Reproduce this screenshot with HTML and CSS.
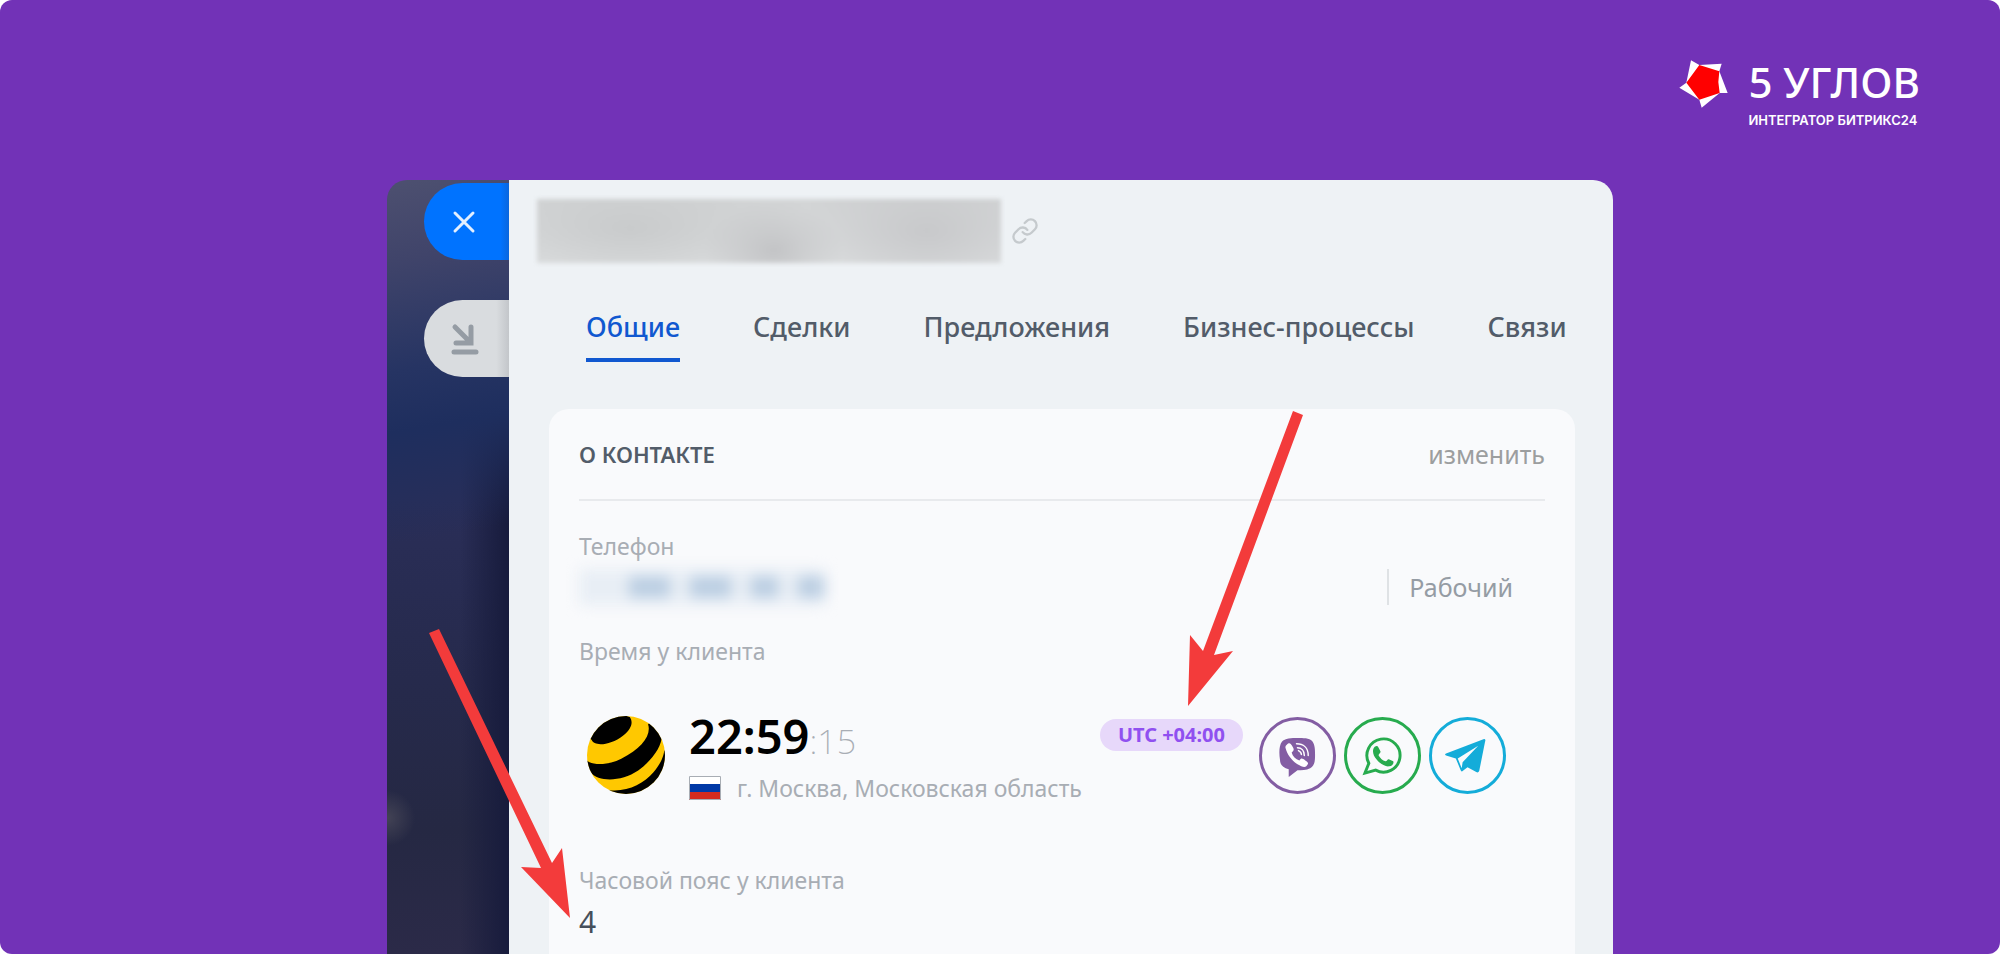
FILE: index.html
```
<!DOCTYPE html>
<html lang="ru">
<head>
    <meta charset="UTF-8">
    <meta name="viewport" content="width=device-width, initial-scale=1.0">
    <title>5 углов</title>
    <link rel="stylesheet" href="styles.css">
</head>
<body>
    <div class="page">
        <header class="top">
            <div class="logo">
                <svg class="logo-star" viewBox="0 0 147 144">
                    <path fill="#fff" d="M36 1L61 15L128 11L121 34L146 99L122 99L68 143L61 119L1 83L22 68Z"/>
                    <path fill="#f00" d="M61 15L121 34L118 66L122 99L61 119L22 68Z"/>
                </svg>
                <div>
                    <div class="logo-name">5 УГЛОВ</div>
                    <div class="logo-sub">ИНТЕГРАТОР БИТРИКС24</div>
                </div>
            </div>
        </header>

        <main class="window">
            <div class="side">
                <button class="side-btn close" aria-label="Закрыть">
                    <svg width="24" height="24" viewBox="0 0 24 24"><path d="M3 3L21 21M21 3L3 21" stroke="#e3efff" stroke-width="3" stroke-linecap="round"/></svg>
                </button>
                <button class="side-btn fold" aria-label="Свернуть">
                    <svg width="26" height="32" viewBox="0 0 26 32"><path d="M3 4L18 19M19 4V20H4M2 29H24" fill="none" stroke="#959ca4" stroke-width="5" stroke-linecap="round"/></svg>
                </button>
            </div>

            <div class="panel">
                <div class="title">
                    <div class="title-hidden"></div>
                    <a href="#" aria-label="Ссылка">
                        <svg width="28" height="28" viewBox="0 0 24 24"><path d="M10 13a5 5 0 0 0 7.540.540l3-3a5 5 0 0 0-7.070-7.070l-1.720 1.710M14 11a5 5 0 0 0-7.540-.540l-3 3a5 5 0 0 0 7.070 7.070l1.710-1.710" fill="none" stroke="#c5cacd" stroke-width="2" stroke-linecap="round"/></svg>
                    </a>
                </div>
                <nav class="tabs">
                    <a href="#" class="active">Общие</a>
                    <a href="#">Сделки</a>
                    <a href="#">Предложения</a>
                    <a href="#">Бизнес-процессы</a>
                    <a href="#">Связи</a>
                </nav>

                <section class="card">
                    <div class="card-head">
                        <h2>О КОНТАКТЕ</h2>
                        <button class="edit">изменить</button>
                    </div>

                    <div class="label">Телефон</div>
                    <div class="phone">
                        <div class="phone-hidden"><i></i><i></i><i></i><i></i></div>
                        <span class="phone-type">Рабочий</span>
                    </div>

                    <div class="label">Время у клиента</div>
                    <div class="client">
                        <svg class="operator" viewBox="24 34 230 230">
                            <defs><clipPath id="ball"><circle cx="139" cy="149" r="115"/></clipPath></defs>
                            <g clip-path="url(#ball)">
                                <rect x="24" y="34" width="230" height="230" fill="#ffc800"/>
                                <path d="M38 105C45 125 95 120 130 92C158 70 160 50 150 37L100 20L10 80Z"/>
                                <path d="M24 165C40 180 85 180 125 160C185 130 215 90 204 58L215 50L245 90C245 125 215 165 175 195C125 228 60 230 34 200L10 190Z"/>
                                <path d="M85 252C140 260 190 235 220 200C245 170 250 150 252 135L270 150L230 270L80 270Z"/>
                            </g>
                        </svg>
                        <div class="client-info">
                            <div class="time"><b>22:59</b><span>:15</span></div>
                            <div class="city">
                                <svg width="32" height="24" viewBox="0 0 32 24"><path fill="#fff" d="M0 0H32V9H0Z"/><path fill="#0039a6" d="M0 8H32V16H0Z"/><path fill="#d52b1e" d="M0 16H32V24H0Z"/><path d="M.5 .5H31.5V23.5H.5Z" fill="none" stroke="#a8adb4"/></svg>
                                <span>г. Москва, Московская область</span>
                            </div>
                        </div>
                        <span class="utc">UTC +04:00</span>
                        <div class="messengers">
                            <a href="#" class="viber" aria-label="Viber">
                                <svg viewBox="0 0 40 40">
                                    <path fill="currentColor" d="M20 2C26 2 32 2 35 5C38 9 38 14 38 19C38 25 38 30 33 33C29 35 24 35 20 35L11 42V34C6 33 2 30 2 24C1 18 1 10 4 6C7 2 14 2 20 2Z"/>
                                    <path fill="#fff" d="M9 9C12 6 13 8 15 11C17 14 16 15 14 17C15 21 18 24 22 25C24 22 25 23 28 25C31 27 32 28 29 31C27 33 24 31 20 29C14 25 9 18 8 13C7 11 8 10 9 9Z"/>
                                    <path d="M19 8C26 8 31 12 31 20M20 12C24 12 27 15 27 20M21 15C23 16 24 17 24 19" fill="none" stroke="#fff" stroke-width="1.5" stroke-linecap="round"/>
                                </svg>
                            </a>
                            <a href="#" class="whatsapp" aria-label="WhatsApp">
                                <svg viewBox="0 0 40 40">
                                    <path d="M2 38L6 28A17 17 0 1 1 13 35Z" fill="none" stroke="currentColor" stroke-width="3"/>
                                    <path fill="currentColor" d="M12 11C14 10 15 10 16 12L18 16C18 18 16 18 16 20C18 23 20 25 23 26C25 26 25 23 27 24L31 26C32 28 30 31 27 31C23 32 17 28 14 24C10 20 9 14 12 11Z"/>
                                </svg>
                            </a>
                            <a href="#" class="telegram" aria-label="Telegram">
                                <svg viewBox="0 0 40 40">
                                    <path fill="currentColor" d="M-2 20Q-4 19 -2 18L37 3Q39 3 38 6L32 36Q31 38 29 37L20 32L15 36Q14 37 13 35L8 23ZM10 23L14 33L15 27L31 10Z" fill-rule="evenodd"/>
                                </svg>
                            </a>
                        </div>
                    </div>

                    <div class="label">Часовой пояс у клиента</div>
                    <div class="value">4</div>
                </section>
            </div>

            <svg class="arrow arrow-utc" width="116" height="298" viewBox="0 0 116 298"><path d="M106 0L116 4L27 244L46 240L1 295L3 224L16 240Z"/></svg>
            <svg class="arrow arrow-zone" width="142" height="290" viewBox="0 0 142 290"><path d="M0 4L10 0L123 234L133 219L141 289L92 238L112 239Z"/></svg>
        </main>
    </div>
</body>
</html>
```
FILE: styles.css
```
* {
    box-sizing: border-box;
}
body {
    margin: 0;
    background: #fff;
    font-family: "Noto Sans", "Open Sans", sans-serif;
}
a {
    color: inherit;
    text-decoration: none;
}
button {
    border: 0;
    padding: 0;
    background: none;
    font-family: inherit;
    cursor: pointer;
}
svg {
    display: block;
    overflow: visible;
}

.page {
    display: flex;
    flex-direction: column;
    height: 100vh;
    overflow: hidden;
    border-radius: 12px;
    background: #7232b7;
}

/* header */
.top {
    display: flex;
    justify-content: flex-end;
    flex: none;
    height: 180px;
    padding: 60px 80px 0 0;
    color: #fff;
}
.logo {
    display: flex;
    align-items: flex-start;
    gap: 20px;
}
.logo-star {
    width: 49px;
    height: 48px;
}
.logo-name {
    font-size: 42px;
    font-weight: 500;
    line-height: 44px;
}
.logo-sub {
    margin-top: 8px;
    font-family: Inter, sans-serif;
    font-size: 13px;
    font-weight: 600;
    line-height: 16px;
}

/* window */
.window {
    position: relative;
    display: flex;
    flex: 1;
    width: 61.3%;
    min-height: 0;
    margin: 0 auto;
}
.side {
    display: flex;
    flex-direction: column;
    align-items: flex-end;
    gap: 40px;
    flex: none;
    width: 122px;
    padding-top: 3px;
    border-radius: 20px 0 0 0;
    background:
        radial-gradient(circle at 0 638px, #434355 0, rgba(67, 67, 85, 0) 28px),
        linear-gradient(170deg, #4d5070 0, #40446a 80px, #263463 190px, #1e2e5e 250px, rgba(30, 46, 94, 0) 360px),
        linear-gradient(90deg, rgba(23, 27, 60, 0) 60%, #171b3c),
        linear-gradient(#2a2e58 320px, #262a4c 500px, #252843 650px, #2b2a48 100%);
}
.side-btn {
    display: flex;
    align-items: center;
    width: 85px;
    height: 77px;
    padding-left: 28px;
    border-radius: 39px 0 0 39px;
}
.close {
    background: linear-gradient(90deg, #0073ff 90%, #0a66dd);
}
.fold {
    background: linear-gradient(90deg, #d9dcdf 85%, #c3c6ca);
}

.panel {
    flex: 1;
    min-width: 0;
    padding: 19px 38px 0 40px;
    border-radius: 0 20px 0 0;
    background: #eef2f5;
}
.title {
    display: flex;
    align-items: center;
    gap: 10px;
    margin-left: -12px;
}
.title-hidden {
    width: 464px;
    height: 64px;
    background:
        radial-gradient(70px 50px at 51% 80%, #c3c4c6, transparent),
        radial-gradient(160px 60px at 20% 45%, #c9cbcc, transparent),
        radial-gradient(130px 70px at 84% 50%, #c8c9cb, transparent),
        linear-gradient(#d2d4d5, #dcdedf);
    filter: blur(2px);
}

.tabs {
    display: flex;
    gap: 73px;
    padding: 45px 0 0 37px;
    color: #525c69;
    font-size: 27px;
    font-weight: 500;
    line-height: 38px;
    white-space: nowrap;
}
.tabs a {
    padding-bottom: 12px;
    border-bottom: 4px solid transparent;
}
.tabs .active {
    border-color: #1058d0;
    color: #1058d0;
}

/* card */
.card {
    margin-top: 47px;
    padding: 0 30px;
    border-radius: 20px;
    background: #f9fafc;
    height: 100%;
}
.card-head {
    display: flex;
    justify-content: space-between;
    align-items: center;
    height: 92px;
    margin-bottom: 28px;
    border-bottom: 2px solid #e8eaed;
}
.card-head h2 {
    margin: 0;
    color: #525c69;
    font-size: 22px;
    font-weight: 600;
}
.edit {
    color: #9c9e9f;
    font-size: 25px;
}
.label {
    color: #a8adb4;
    font-size: 23px;
    line-height: 34px;
}
.phone {
    display: flex;
    justify-content: space-between;
    align-items: center;
    height: 48px;
    margin-bottom: 23px;
}
.phone-hidden {
    display: flex;
    align-items: center;
    gap: 20px;
    width: 246px;
    height: 36px;
    padding-left: 50px;
    background: #e8eef5;
    filter: blur(7px);
}
.phone-hidden i {
    width: 42px;
    height: 22px;
    background: #bccfe3;
}
.phone-hidden i:nth-child(n+3) {
    width: 28px;
}
.phone-type {
    margin-right: 32px;
    padding-left: 20px;
    border-left: 2px solid #dfe2e5;
    color: #959ca4;
    font-size: 25px;
    line-height: 36px;
}

.client {
    display: flex;
    align-items: center;
    height: 132px;
    margin: 21px 0 42px;
    padding: 0 39px 0 8px;
}
.operator {
    width: 78px;
    height: 78px;
}
.client-info {
    margin-left: 24px;
}
.time {
    padding-top: 10px;
    line-height: 40px;
}
.time b {
    color: #000;
    font-size: 47px;
    font-weight: 600;
}
.time span {
    color: #a8adb4;
    font-size: 34px;
    font-weight: 200;
}
.city {
    display: flex;
    align-items: center;
    gap: 16px;
    margin-top: 3px;
    color: #a8adb4;
    font-size: 23px;
    line-height: 34px;
    white-space: nowrap;
}
.utc {
    align-self: flex-start;
    margin: 30px 16px 0 auto;
    padding: 0 18px;
    border-radius: 16px;
    background: #e7d8fa;
    color: #9050f0;
    font-size: 20px;
    font-weight: 700;
    line-height: 32px;
    white-space: nowrap;
}
.messengers {
    display: flex;
    gap: 8px;
}
.messengers a {
    display: flex;
    align-items: center;
    justify-content: center;
    width: 77px;
    height: 77px;
    border: 3px solid;
    border-radius: 50%;
}
.messengers svg {
    width: 39px;
    height: 39px;
}
.viber {
    color: #835da3;
}
.whatsapp {
    color: #27ab4e;
}
.telegram {
    color: #14acd9;
}
.value {
    color: #464f5b;
    font-size: 30px;
    line-height: 50px;
}

/* pointers over the window */
.arrow {
    position: absolute;
    fill: #f33b3b;
}
.arrow-utc {
    top: 231px;
    left: 800px;
}
.arrow-zone {
    top: 449px;
    left: 42px;
}
```
